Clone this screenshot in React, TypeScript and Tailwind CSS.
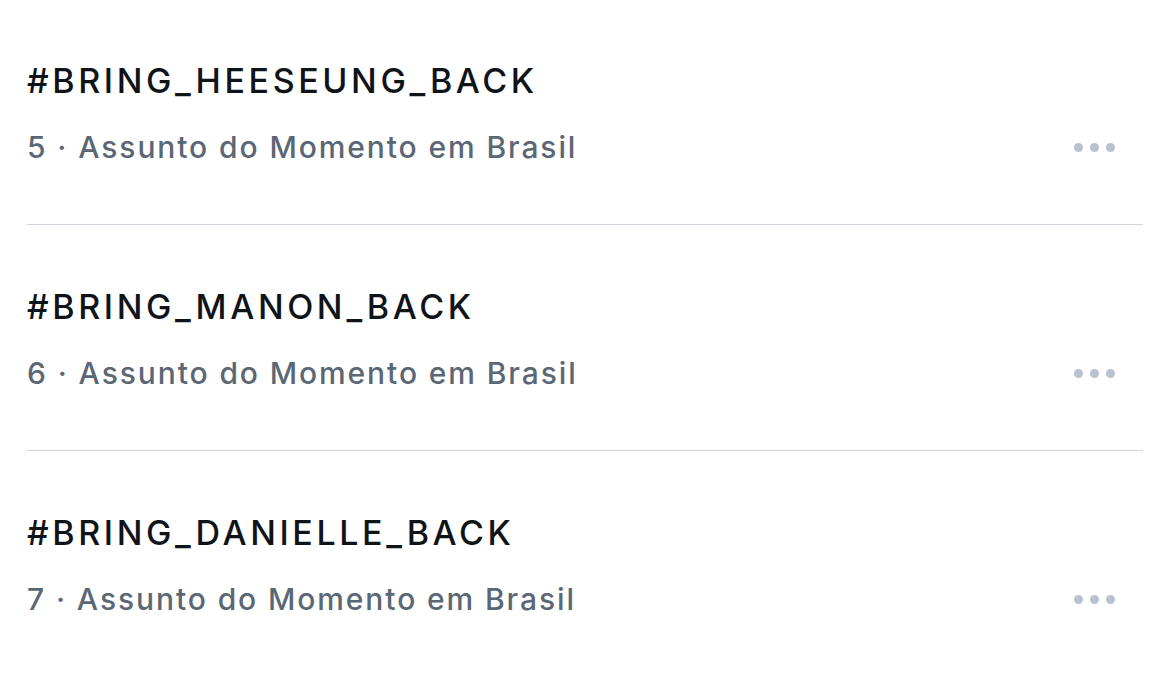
const trends = [
  { rank: 5, tag: "#BRING_HEESEUNG_BACK" },
  { rank: 6, tag: "#BRING_MANON_BACK" },
  { rank: 7, tag: "#BRING_DANIELLE_BACK" },
]

function MoreDots() {
  return (
    <div className="flex items-center gap-[7px] mr-[28px]" aria-label="Mais">
      <span className="size-[9px] rounded-full bg-[#b9c2cc]" />
      <span className="size-[9px] rounded-full bg-[#b9c2cc]" />
      <span className="size-[9px] rounded-full bg-[#b9c2cc]" />
    </div>
  )
}

export default function App() {
  return (
    <div
      className="w-[1170px] h-[673px] bg-white px-[27px] overflow-hidden"
      style={{ fontFamily: "Inter, 'Noto Sans', sans-serif" }}
    >
      <div className="-mt-px">
        {trends.map((t, i) => (
          <div
            key={t.rank}
            className={`pt-[62px] pb-[59px] ${i < trends.length - 1 ? "border-b border-[#cfd5db]" : ""}`}
          >
            <div className="text-[34px] leading-[40px] font-medium tracking-[3.6px] text-[#0f1419]">{t.tag}</div>
            <div className="mt-[28px] flex items-center justify-between">
              <div className="text-[30px] leading-[36px] font-medium tracking-[1.9px] text-[#5b6774]">
                {t.rank} · Assunto do Momento em Brasil
              </div>
              <MoreDots />
            </div>
          </div>
        ))}
      </div>
    </div>
  )
}
